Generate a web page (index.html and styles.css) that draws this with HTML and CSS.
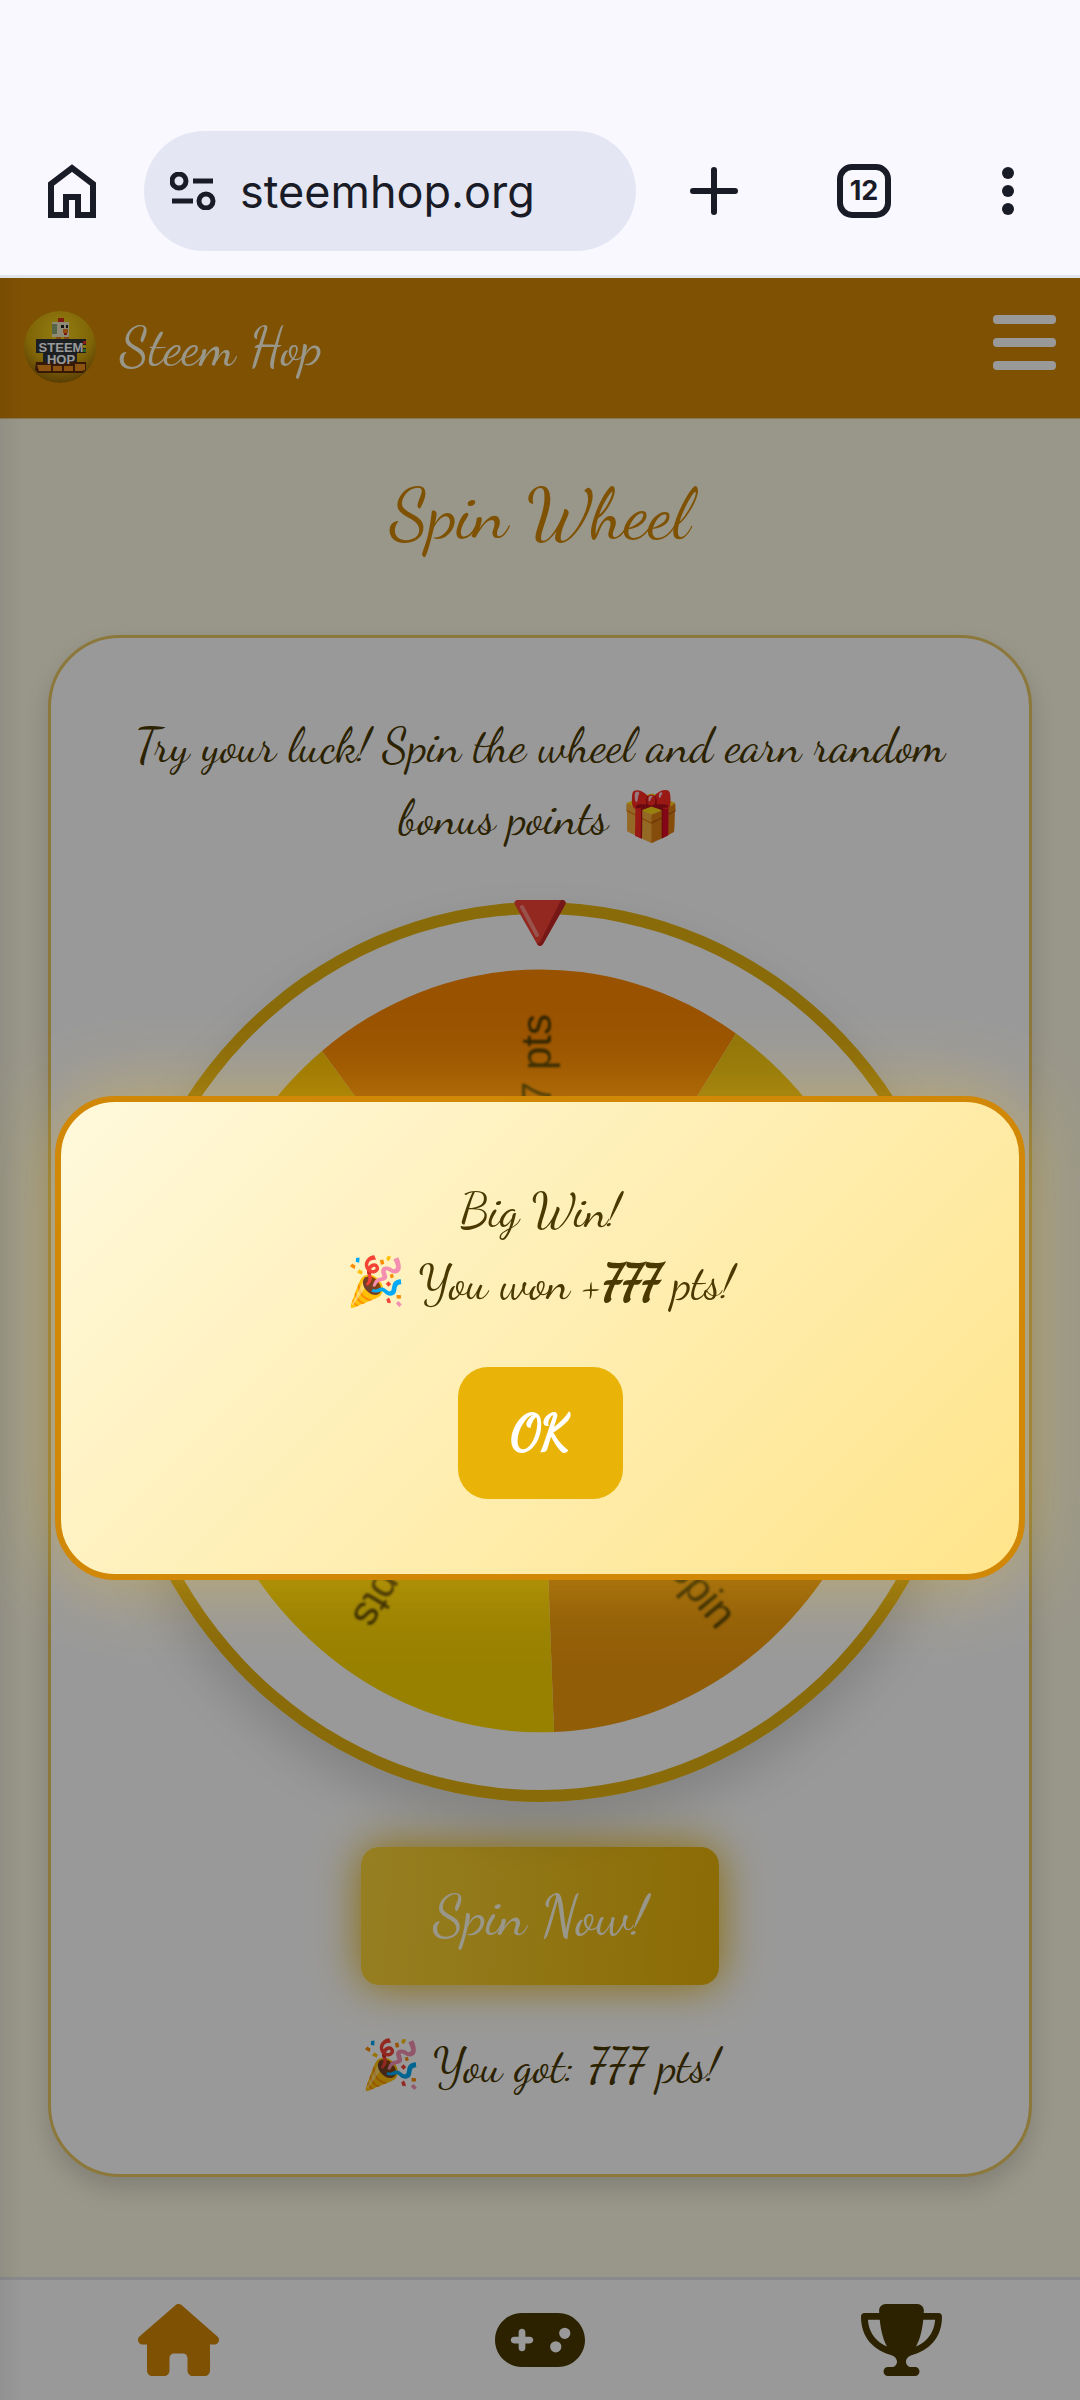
FILE: index.html
```html
<!DOCTYPE html>
<html lang="en">
<head>
<meta charset="utf-8">
<meta name="viewport" content="width=device-width, initial-scale=1">
<title>Steem Hop</title>
<link rel="stylesheet" href="styles.css">
</head>
<body>
<div class="browser">
  <button class="tool" aria-label="Home">
    <svg width="48" height="54" viewBox="0 0 48 54"><path d="M3 51V20L24 4l21 16v31H30V33H18v18z" fill="none" stroke="currentColor" stroke-width="6"/></svg>
  </button>
  <div class="address">
    <svg width="46" height="38" viewBox="0 0 46 38" fill="none" stroke="currentColor" stroke-width="5"><circle cx="9" cy="9" r="7"/><path d="M23 9h20M2 29h21"/><circle cx="36" cy="29" r="7"/></svg>
    <input class="url" type="text" value="steemhop.org" aria-label="Address">
  </div>
  <button class="tool" aria-label="New tab">
    <svg width="48" height="48" viewBox="0 0 48 48"><path d="M24 3v42M3 24h42" stroke="currentColor" stroke-width="6" stroke-linecap="round"/></svg>
  </button>
  <button class="tool tabs" aria-label="Tabs">12</button>
  <button class="tool" aria-label="More">
    <svg width="12" height="48" viewBox="0 0 12 48" fill="currentColor"><circle cx="6" cy="6" r="6"/><circle cx="6" cy="24" r="6"/><circle cx="6" cy="42" r="6"/></svg>
  </button>
</div>

<div class="site">
  <header class="header">
    <a class="brand" href="#">
      <svg class="logo" width="72" height="72" viewBox="0 0 72 72">
        <defs><radialGradient id="ball" cx=".5" cy=".3" r=".75"><stop offset="0" stop-color="#f5d31c"/><stop offset=".6" stop-color="#d6a80c"/><stop offset="1" stop-color="#8a5c08"/></radialGradient></defs>
        <circle cx="36" cy="36" r="36" fill="url(#ball)"/>
        <path d="M32 24h5v6h-5zM40 24h5v6h-5z" fill="#e07c14"/>
        <path d="M28 11h17v15H28z" fill="#eee6c4"/><path d="M28 13h5v10h-5z" fill="#8fa878"/>
        <path d="M34 7h6v4h-6z" fill="#d8301c"/><path d="M37 14h3v3h-3zM42 14h2v3h-2z" fill="#222"/><path d="M39 18h5v4h-5z" fill="#f07d1a"/><path d="M40 22h3v2h-3z" fill="#c8281a"/>
        <path d="M12 28h50v14h-9v13H19V42h-7z" fill="#30343a"/>
        <path d="M59 30h3v3h-3z" fill="#d33"/><path d="M59 34h3v3h-3z" fill="#dc2"/><path d="M59 38h3v3h-3z" fill="#4a4"/>
        <path d="M12 51h50v8l-3 3H14l-3-3z" fill="#5b2c0c"/><path d="M13 54h14v6H15zM29 55h9v5h-9zM40 55h9v5h-9zM51 53h10v6l-3 1h-7z" fill="#e8891c"/>
        <text x="37" y="41" class="logo-text" text-anchor="middle">STEEM</text>
        <text x="37" y="53" class="logo-text" text-anchor="middle">HOP</text>
      </svg>
      <span>Steem Hop</span>
    </a>
    <button class="menu" aria-label="Menu"><i></i><i></i><i></i></button>
  </header>

  <main class="main">
    <h1 class="title">Spin Wheel</h1>
    <section class="card">
      <p class="lead">Try your luck! Spin the wheel and earn random bonus points 🎁</p>
      <div class="wheel">
        <svg class="disc" viewBox="0 0 834 876">
          <path d="M417 436.500L199 137A353 381.500 0 0 1 613 119.500z" fill="#ff8a00"/>
          <path d="M417 436.500L613 119.500A353 381.500 0 0 1 757 540z" fill="#f1c40f"/>
          <path d="M417 436.500L757 540A353 381.500 0 0 1 431 818z" fill="#f39c0c"/>
          <path d="M417 436.500L431 818A353 381.500 0 0 1 86 568z" fill="#ffd700"/>
          <path d="M417 436.500L86 568A353 381.500 0 0 1 199 137z" fill="#ffc400"/>
          <g class="slice-text" text-anchor="end">
            <text transform="translate(428 100) rotate(-90)">777 pts</text>
            <text transform="translate(594 717) rotate(50)">Spin</text>
            <text transform="translate(228 703) rotate(121)">pts</text>
          </g>
        </svg>
        <svg class="pointer" width="54" height="48" viewBox="0 0 54 48"><path d="M4 1h46q4 1 2 5L30 45q-3 4-6 0L2 6Q0 2 4 1z" fill="#f44336"/><path d="M48 1h2q4 1 2 5L30 45q-3 4-6 0l3-2z" fill="#c62828"/><path d="M9 8l15 28" stroke="#ff8a80" stroke-width="4" stroke-linecap="round"/></svg>
      </div>
      <button class="spin">Spin Now!</button>
      <p class="result">🎉 You got: 777 pts!</p>
    </section>
  </main>

  <nav class="nav">
    <a class="active" href="#" aria-label="Home"><svg width="81" height="72" viewBox="0 0 576 512" fill="currentColor"><path d="M575.8 255.500c0 18-15 32.100-32 32.100h-32l.7 160.200c0 2.700-.2 5.400-.5 8.100V472c0 22.100-17.900 40-40 40H392c-22.100 0-40-17.900-40-40V384c0-17.700-14.300-32-32-32H256c-17.700 0-32 14.300-32 32v88c0 22.100-17.900 40-40 40H104c-22.100 0-40-17.900-40-40V287.600H32c-18 0-32-14-32-32.100c0-9 3-17 10-24L266.400 8c7-7 15-8 22-8s15 2 21 7L564.800 231.500c8 7 12 15 11 24z"/></svg></a>
    <a href="#" aria-label="Games"><svg width="90" height="72" viewBox="0 0 640 512" fill="currentColor"><path d="M192 64C86 64 0 150 0 256S86 448 192 448H448c106 0 192-86 192-192s-86-192-192-192H192zM496 168a40 40 0 1 1 0 80 40 40 0 1 1 0-80zM392 304a40 40 0 1 1 80 0 40 40 0 1 1 -80 0zM168 200c0-13.300 10.700-24 24-24s24 10.700 24 24v32h32c13.300 0 24 10.700 24 24s-10.700 24-24 24H216v32c0 13.300-10.700 24-24 24s-24-10.700-24-24V280H136c-13.300 0-24-10.700-24-24s10.700-24 24-24h32V200z"/></svg></a>
    <a href="#" aria-label="Leaderboard"><svg width="81" height="72" viewBox="0 0 576 512" fill="currentColor"><path d="M400 0H176c-26.500 0-48.100 21.800-47.100 48.200c.2 5.300 .4 10.600 .7 15.800H24C10.700 64 0 74.700 0 88c0 92.600 33.500 157 78.500 200.700c44.300 43.100 98.300 64.800 138.100 75.800c23.400 6.500 39.400 26 39.400 45.600c0 20.900-17 37.900-37.900 37.900H192c-17.700 0-32 14.300-32 32s14.300 32 32 32H384c17.700 0 32-14.300 32-32s-14.300-32-32-32H357.900C337 448 320 431 320 410.100c0-19.600 15.900-39.200 39.400-45.600c39.900-11 93.900-32.700 138.200-75.800C542.500 245 576 180.600 576 88c0-13.300-10.700-24-24-24H446.400c.3-5.200 .5-10.400 .7-15.800C448.100 21.800 426.500 0 400 0zM48.900 112h84.400c9.100 90.100 29.200 150.300 51.900 190.600c-24.900-11-50.800-26.500-73.200-48.300c-32-31.100-58-76-63-142.300zM464.100 254.300c-22.400 21.800-48.300 37.300-73.200 48.300c22.700-40.300 42.800-100.500 51.900-190.600h84.400c-5.100 66.300-31.100 111.200-63 142.300z"/></svg></a>
  </nav>

  <div class="overlay">
    <div class="modal" role="dialog" aria-label="Big Win">
      <p>Big Win!<br>🎉 You won +<b>777</b> pts!</p>
      <button class="ok">OK</button>
    </div>
  </div>
</div>
</body>
</html>
```
FILE: styles.css
```css
* { box-sizing: border-box; }
body {
  margin: 0;
  min-height: 100vh;
  display: flex;
  flex-direction: column;
  font-family: "Dancing Script", "Liberation Serif", cursive;
  font-size: 48px;
  line-height: 72px;
  color: #4a3900;
  background: #f9f8fe;
}
button { border: 0; padding: 0; font: inherit; color: inherit; background: none; }
svg { display: block; }
p { margin: 0; }

.browser {
  display: flex;
  align-items: center;
  padding: 131px 66px 24px 48px;
  border-bottom: 3px solid #e2e4ec;
  color: #191b26;
  font-family: Inter, sans-serif;
}
.address {
  flex: 1;
  min-width: 0;
  height: 120px;
  margin: 0 54px 0 48px;
  padding: 0 24px 0 26px;
  border-radius: 60px;
  background: #e4e6f3;
  display: flex;
  align-items: center;
  gap: 24px;
}
.address svg { flex: none; }
.url {
  flex: 1;
  min-width: 0;
  border: 0;
  padding: 0;
  background: none;
  color: inherit;
  font: 400 45px Inter, sans-serif;
}
.tabs {
  width: 54px;
  height: 54px;
  margin: 0 111px 0 99px;
  border: 6px solid;
  border-radius: 15px;
  font-size: 27px;
  font-weight: 700;
  line-height: 42px;
}

.site {
  flex: 1;
  position: relative;
  display: flex;
  flex-direction: column;
  background: #fffbe6;
}
.header {
  display: flex;
  justify-content: space-between;
  align-items: center;
  padding: 22px 24px 24px;
  height: 141px;
  border-bottom: 1px solid #e6c88a;
  background: #d48806;
}
.brand {
  display: flex;
  align-items: center;
  gap: 24px;
  color: #fffbe6;
  font-size: 54px;
  text-decoration: none;
}
.logo-text { font: 700 13px "Liberation Sans", sans-serif; fill: #fff; }
.menu { display: grid; gap: 14px; padding-bottom: 10px; }
.menu i { width: 63px; height: 9px; border-radius: 4px; background: #fff; }

.main { flex: 1; padding: 50px 48px 48px; }
.title {
  margin: 0 0 76px;
  text-align: center;
  font-size: 72px;
  font-weight: 400;
  line-height: 90px;
  color: #d48806;
}
.card {
  padding: 72px 60px;
  border: 3px solid #e9c861;
  border-radius: 72px;
  background: #fff;
  box-shadow: 0 12px 24px rgba(0, 0, 0, .15);
  text-align: center;
}
.wheel {
  position: relative;
  margin: 48px 0 45px;
  border: 12px solid #e6b310;
  border-radius: 50%;
  box-shadow: 0 24px 48px rgba(0, 0, 0, .15);
}
.disc { width: 100%; height: auto; }
.slice-text { font: 42px "Liberation Sans", sans-serif; fill: #4a3900; filter: blur(1px); }
.pointer { position: absolute; top: -15px; left: 50%; transform: translateX(-50%); }
.spin {
  height: 138px;
  padding: 0 72px;
  border-radius: 18px;
  background: linear-gradient(95deg, #fad43a, #e8b308);
  box-shadow: 0 0 45px #e8b308;
  color: #fffbe6;
  font-size: 57px;
}
.result { margin-top: 45px; }

.nav {
  display: flex;
  justify-content: space-around;
  padding: 24px 0;
  border-top: 3px solid #e5e7eb;
  background: #fff;
}
.nav .active { color: #d48806; }
.nav a { color: #4a3900; }

.overlay {
  position: absolute;
  inset: 0;
  padding: 0 55px 3px;
  display: flex;
  align-items: center;
  justify-content: center;
  background:
    linear-gradient(90deg, rgba(0, 0, 0, .05), transparent) 0 0 / 24px 100% no-repeat,
    rgba(0, 0, 0, .4);
}
.modal {
  width: 100%;
  padding: 73px 72px 75px;
  border: 6px solid #d28807;
  border-radius: 60px;
  background: linear-gradient(135deg, #fff9dc, #ffe48a);
  box-shadow: 0 0 75px rgba(255, 200, 40, .4);
  text-align: center;
}
.modal b, .ok {
  font-weight: 400;
  -webkit-text-stroke: 2px;
}
.ok {
  width: 165px;
  height: 132px;
  margin-top: 48px;
  border-radius: 30px;
  background: #eab308;
  color: #fff;
}
```
